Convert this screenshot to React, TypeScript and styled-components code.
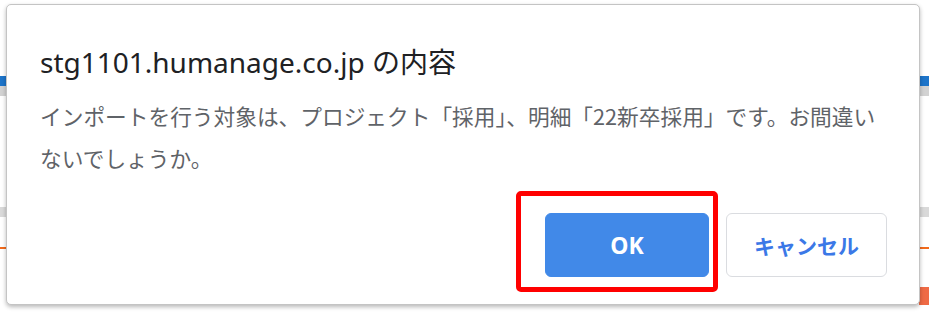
import styled, { createGlobalStyle } from 'styled-components'

const GlobalStyle = createGlobalStyle`
  html, body {
    margin: 0;
    padding: 0;
    background: #ffffff;
  }
  body {
    font-family: "Noto Sans", "Noto Sans CJK JP", sans-serif;
  }
`

const Page = styled.div`
  position: relative;
  width: 929px;
  height: 319px;
  overflow: hidden;
  background: #ffffff;
`

// page content peeking out behind the dialog
const Backdrop = styled.div`
  display: flex;
  flex-direction: column;
  padding-top: 76px;
`

const Stripe = styled.div<{ $h: number; $color: string; $gap?: number }>`
  height: ${p => p.$h}px;
  background: ${p => p.$color};
  margin-top: ${p => p.$gap || 0}px;
`

const CornerBlock = styled.div`
  align-self: flex-end;
  width: 10px;
  height: 18px;
  margin-top: 38px;
  background: #ef6a45;
`

const Dialog = styled.div`
  position: absolute;
  left: 6px;
  top: 4px;
  width: 914px;
  height: 301px;
  box-sizing: border-box;
  background: #ffffff;
  border: 1px solid #c4c4c4;
  border-radius: 5px;
  box-shadow: 0 2px 4px rgba(0, 0, 0, 0.28);
  padding: 38px 32px 27px 33px;
  display: flex;
  flex-direction: column;
`

const Title = styled.div`
  font-size: 28px;
  line-height: 38px;
  color: #202124;
`

const Message = styled.div`
  margin-top: 14px;
  max-width: 845px;
  font-family: "Noto Sans CJK JP", sans-serif;
  font-size: 21.7px;
  line-height: 42px;
  color: #5f6368;
`

const Actions = styled.div`
  margin-top: auto;
  display: flex;
  justify-content: flex-end;
  gap: 17px;
`

const Highlight = styled.div`
  position: relative;
`

const RedFrame = styled.div`
  position: absolute;
  left: -29px;
  top: -22px;
  width: 202px;
  height: 101px;
  box-sizing: border-box;
  border: 5px solid #ff0000;
  border-radius: 5px;
  pointer-events: none;
`

const Button = styled.button<{ $primary?: boolean }>`
  width: ${p => (p.$primary ? 164 : 161)}px;
  height: 64px;
  border-radius: 6px;
  border: 1px solid ${p => (p.$primary ? '#4189e8' : '#dadce0')};
  background: ${p => (p.$primary ? '#4189e8' : '#ffffff')};
  color: ${p => (p.$primary ? '#ffffff' : '#3b78e7')};
  font-family: "Noto Sans", "Noto Sans CJK JP", sans-serif;
  font-size: ${p => (p.$primary ? 23 : 21)}px;
  font-weight: 700;
  cursor: pointer;
  padding: 0;
`

export default function App () {
  return (
    <Page>
      <GlobalStyle />
      <Backdrop>
        <Stripe $h={10} $color='#1d74c9' />
        <Stripe $h={10} $color='#d2d2d2' />
        <Stripe $h={10} $color='#d9d9d9' $gap={111} />
        <Stripe $h={2} $color='#f26a1b' $gap={30} />
        <CornerBlock />
      </Backdrop>
      <Dialog>
        <Title>stg1101.humanage.co.jp の内容</Title>
        <Message>
          インポートを行う対象は、プロジェクト「採用」、明細「22新卒採用」です。お間違いないでしょうか。
        </Message>
        <Actions>
          <Highlight>
            <Button $primary>OK</Button>
            <RedFrame />
          </Highlight>
          <Button>キャンセル</Button>
        </Actions>
      </Dialog>
    </Page>
  )
}
